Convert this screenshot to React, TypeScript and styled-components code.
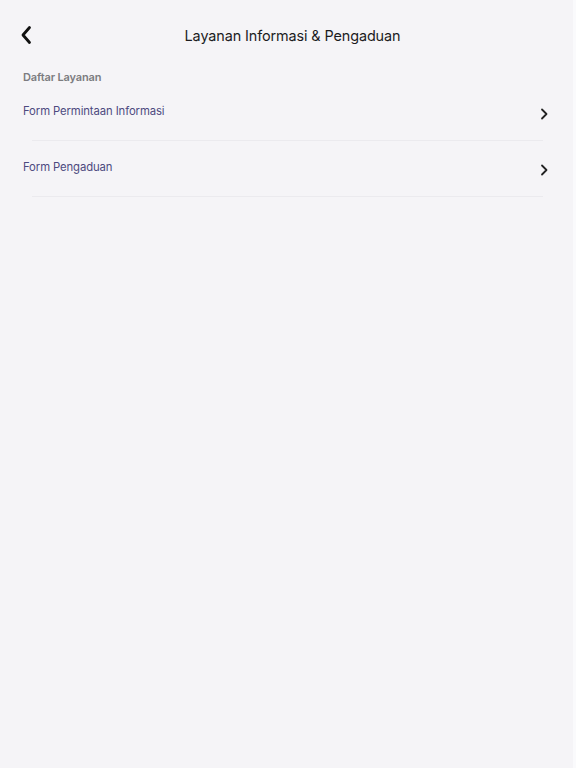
import styled, { createGlobalStyle } from "styled-components";

const GlobalStyle = createGlobalStyle`
    html, body {
        margin: 0;
        padding: 0;
        background: #f5f4f7;
    }
    body {
        font-family: Inter, "Noto Sans", sans-serif;
    }
`;

const Page = styled.div`
    width: 576px;
    min-height: 768px;
    box-sizing: border-box;
    background: #f5f4f7;
    border-right: 3px solid #fafafc;
`;

const Header = styled.div`
    display: grid;
    grid-template-columns: 48px 1fr 48px;
    align-items: center;
    height: 70px;
    padding-left: 20px;
`;

const BackButton = styled.button`
    display: flex;
    align-items: center;
    background: none;
    border: none;
    padding: 0;
    width: 24px;
    height: 24px;
    color: #111;
`;

const Title = styled.h1`
    margin: 0 0 0 -8px;
    font-size: 14.4px;
    font-weight: 400;
    color: #1c1c1e;
    text-align: center;
    letter-spacing: -0.1px;
`;

const Section = styled.div`
    padding: 0 0 0 23px;
`;

const SectionLabel = styled.div`
    font-size: 11px;
    font-weight: 600;
    color: #7c7c80;
    height: 15px;
    line-height: 15px;
    letter-spacing: -0.15px;
`;

const Row = styled.div`
    display: flex;
    flex-direction: column;
`;

const RowContent = styled.div`
    display: flex;
    justify-content: space-between;
    align-items: flex-start;
    height: 55px;
    padding-right: 25px;
`;

const RowText = styled.span`
    font-size: 11.3px;
    color: #4d4a7f;
    line-height: 18px;
    margin-top: 17px;
    letter-spacing: -0.1px;
`;

const Chevron = styled.span`
    display: flex;
    margin-top: 23px;
    color: #222;
`;

const Divider = styled.div`
    height: 1px;
    margin: 0 30px 0 9px;
    background: #ebeaee;
`;

const items = ["Form Permintaan Informasi", "Form Pengaduan"];

function App() {
    return (
        <>
            <GlobalStyle />
            <Page>
                <Header>
                    <BackButton aria-label="Kembali">
                        <svg width="14" height="20" viewBox="0 0 14 20">
                            <path d="M9.5 2.5 L3 10 L9.5 17.5" fill="none" stroke="#111" strokeWidth="2.8" strokeLinecap="round" strokeLinejoin="round" />
                        </svg>
                    </BackButton>
                    <Title>Layanan Informasi &amp; Pengaduan</Title>
                    <div />
                </Header>
                <Section>
                    <SectionLabel>Daftar Layanan</SectionLabel>
                    {items.map((item) => (
                        <Row key={item}>
                            <RowContent>
                                <RowText>{item}</RowText>
                                <Chevron>
                                    <svg width="8" height="12" viewBox="0 0 8 12">
                                        <path d="M2 1.5 L6.5 6 L2 10.5" fill="none" stroke="#222" strokeWidth="1.8" strokeLinecap="round" strokeLinejoin="round" />
                                    </svg>
                                </Chevron>
                            </RowContent>
                            <Divider />
                        </Row>
                    ))}
                </Section>
            </Page>
        </>
    );
}

export default App;
